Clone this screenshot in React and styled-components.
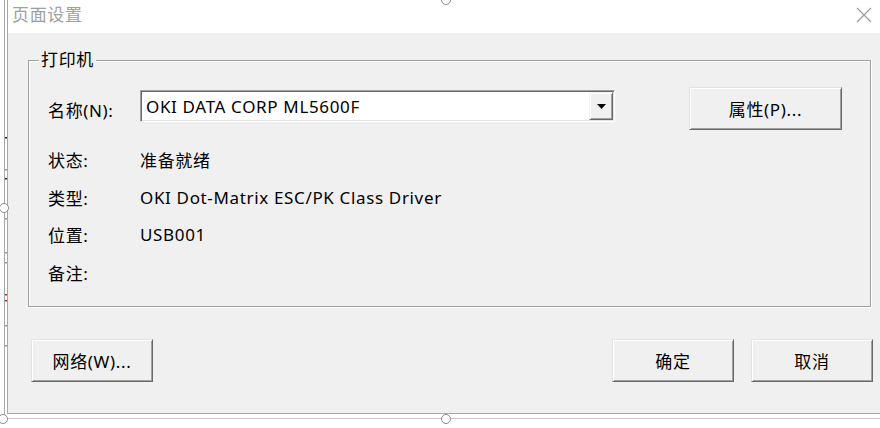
import React from 'react';
import styled, { createGlobalStyle } from 'styled-components';

const GlobalStyle = createGlobalStyle`
  *, *::before, *::after {
    box-sizing: border-box;
  }
  html, body {
    margin: 0;
    padding: 0;
    background: #fff;
  }
  body {
    font-family: "Noto Sans", "Noto Sans CJK SC", sans-serif;
    color: #000;
  }
`;

const Stage = styled.div`
  position: relative;
  width: 880px;
  height: 428px;
  overflow: hidden;
  display: flex;
  padding-left: 7px;
`;

const Ruler = styled.svg`
  position: absolute;
  left: 0;
  top: 0;
`;

const Dialog = styled.div`
  width: 873px;
  height: 414px;
  border-left: 1px solid #a8a8a8;
  border-bottom: 1px solid #a8a8a8;
  display: flex;
  flex-direction: column;
  font-size: 17px;
  letter-spacing: 0.65px;
`;

const TitleBar = styled.div`
  height: 33px;
  flex-shrink: 0;
  background: #fff;
  display: flex;
  align-items: center;
  justify-content: space-between;
  padding: 0 8px 4px 4px;
`;

const Title = styled.span`
  color: #a0a0a0;
  font-size: 17px;
  line-height: 22px;
`;

const Body = styled.div`
  flex: 1;
  background: #f0f0f0;
  padding: 27px 9px 0 20px;
  display: flex;
  flex-direction: column;
`;

const GroupBox = styled.div`
  position: relative;
  height: 247px;
  flex-shrink: 0;
  border: 1px solid #a0a0a0;
  box-shadow: inset 1px 1px 0 #fff, 1px 1px 0 #fff;
  padding: 26px 0 0 19px;
`;

const GroupLabel = styled.span`
  position: absolute;
  top: -12px;
  left: 10px;
  padding: 0 2px;
  background: #f0f0f0;
  line-height: 22px;
`;

const NameRow = styled.div`
  display: flex;
  align-items: flex-start;
`;

const FieldLabel = styled.span`
  width: 92px;
  flex-shrink: 0;
  height: ${p => p.$h || 37}px;
  display: flex;
  align-items: center;
  padding-top: ${p => p.$pt || 0}px;
`;

const Combo = styled.div`
  width: 475px;
  height: 32px;
  margin-top: 3px;
  background: #fff;
  border: 1px solid;
  border-color: #a0a0a0 #fff #fff #a0a0a0;
  box-shadow: inset 1px 1px 0 #696969, inset -1px -1px 0 #e3e3e3;
  display: flex;
  align-items: stretch;
  padding: 1px;
`;

const ComboText = styled.span`
  flex: 1;
  padding-left: 4px;
  display: flex;
  align-items: center;
  white-space: nowrap;
`;

const ComboArrow = styled.span`
  width: 24px;
  background: #f0f0f0;
  border: 1px solid;
  border-color: #f0f0f0 #696969 #696969 #f0f0f0;
  box-shadow: inset 1px 1px 0 #fff, inset -1px -1px 0 #a0a0a0;
  display: flex;
  align-items: center;
  justify-content: center;
`;

const Button = styled.button`
  width: ${p => p.$w || 122}px;
  height: 43px;
  margin-left: ${p => p.$ml || 0}px;
  flex-shrink: 0;
  background: #f0f0f0;
  border: 1px solid;
  border-color: #e3e3e3 #696969 #696969 #e3e3e3;
  box-shadow: inset 1px 1px 0 #fff, inset -1px -1px 0 #a0a0a0;
  font-family: inherit;
  font-size: 17px;
  letter-spacing: inherit;
  color: #000;
  padding: 0 0 1px;
  cursor: default;
`;

const InfoList = styled.div`
  margin-top: 11px;
  display: grid;
  grid-template-columns: 92px auto;
  grid-auto-rows: 37.5px;
  align-items: center;
`;

const Footer = styled.div`
  display: flex;
  align-items: center;
  padding: 32px 7px 0 3px;
  margin-right: -9px;
`;

const Spacer = styled.div`
  flex: 1;
`;

const Handle = styled.span`
  position: absolute;
  width: 10px;
  height: 10px;
  border-radius: 50%;
  background: #fff;
  border: 1px solid #8a8a8a;
  left: ${p => p.$x - 5}px;
  top: ${p => p.$y - 5}px;
`;

const SelLineV = styled.span`
  position: absolute;
  left: 4px;
  top: 0;
  width: 1px;
  height: 419px;
  background: #a8a8a8;
`;

const SelLineH = styled.span`
  position: absolute;
  left: 4px;
  top: 418px;
  width: 880px;
  height: 1px;
  background: #c8c8c8;
`;

const info = [
  ['状态:', '准备就绪'],
  ['类型:', 'OKI Dot-Matrix ESC/PK Class Driver'],
  ['位置:', 'USB001'],
  ['备注:', ''],
];

const ticks = [
  { y: 137, c: '#222' }, { y: 169, c: '#999' }, { y: 178, c: '#222' },
  { y: 210, c: '#999' }, { y: 218, c: '#999' }, { y: 252, c: '#999' },
  { y: 262, c: '#999' }, { y: 294, c: '#e02020' }, { y: 300, c: '#e02020' },
  { y: 325, c: '#999' }, { y: 345, c: '#999' },
];

export default function App() {
  return (
    <>
      <GlobalStyle />
      <Stage>
        <Ruler width="8" height="428">
          {ticks.map(t => (
            <rect key={t.y} x="4" y={t.y} width="3" height="1.5" fill={t.c} />
          ))}
        </Ruler>
        <Dialog>
          <TitleBar>
            <Title>页面设置</Title>
            <svg width="16" height="16" viewBox="0 0 16 16">
              <path d="M1 1 L15 15 M15 1 L1 15" stroke="#9a9a9a" strokeWidth="1.2" fill="none" />
            </svg>
          </TitleBar>
          <Body>
            <GroupBox>
              <GroupLabel>打印机</GroupLabel>
              <NameRow>
                <FieldLabel $h={43} $pt={1}>名称(N):</FieldLabel>
                <Combo>
                  <ComboText>OKI DATA CORP ML5600F</ComboText>
                  <ComboArrow>
                    <svg width="9" height="5" viewBox="0 0 9 5">
                      <path d="M0 0 H9 L4.5 5 Z" fill="#000" />
                    </svg>
                  </ComboArrow>
                </Combo>
                <Button $w={153} $ml={74}>属性(P)...</Button>
              </NameRow>
              <InfoList>
                {info.map(([k, v]) => (
                  <React.Fragment key={k}>
                    <span>{k}</span>
                    <span>{v}</span>
                  </React.Fragment>
                ))}
              </InfoList>
            </GroupBox>
            <Footer>
              <Button>网络(W)...</Button>
              <Spacer />
              <Button>确定</Button>
              <Button $ml={17}>取消</Button>
            </Footer>
          </Body>
        </Dialog>
        <SelLineV />
        <SelLineH />
        <Handle $x={446} $y={0} />
        <Handle $x={4} $y={208} />
        <Handle $x={3} $y={419} />
        <Handle $x={446} $y={419} />
      </Stage>
    </>
  );
}
